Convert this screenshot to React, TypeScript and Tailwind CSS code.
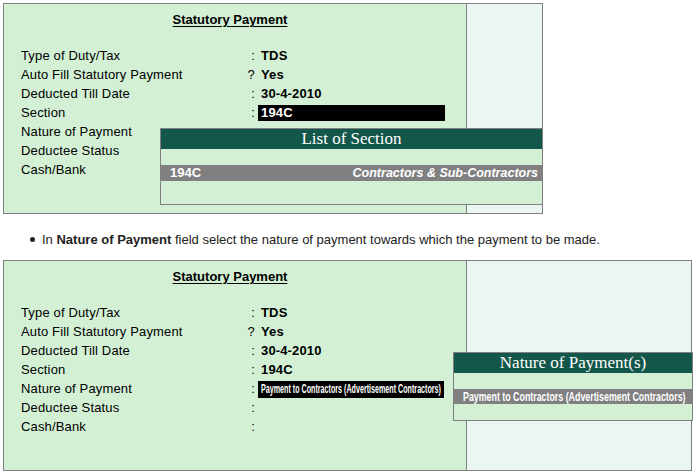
import React from "react";

type Row = { label: string; sep: string; value?: React.ReactNode };

const font = "font-['Liberation_Sans',Arial,sans-serif]";

function Field({ label, sep, value }: Row) {
  return (
    <div className="flex h-[19px] items-center text-[13px] tracking-[0.15px] text-black">
      <div className="w-[243px] shrink-0 pl-[17px] whitespace-nowrap">{label}</div>
      <div className="w-[11px] shrink-0 pr-[3px] text-right">{sep}</div>
      {value}
    </div>
  );
}

function Bold({ children }: { children: React.ReactNode }) {
  return <span className="pl-[3px] font-bold">{children}</span>;
}

function Panel({
  rows,
  width,
  popup,
}: {
  rows: Row[];
  width: string;
  popup: React.ReactNode;
}) {
  return (
    <div className={`relative flex h-[211px] ${width} border border-[#808080]`}>
      <div className="w-[462px] shrink-0 bg-[#d3f0d5] pt-[6px]">
        <div className="flex justify-center pr-[10px]">
          <span className="text-[13px] font-bold underline underline-offset-2">Statutory Payment</span>
        </div>
        <div className="mt-[17px]">
          {rows.map((r) => (
            <Field key={r.label} {...r} />
          ))}
        </div>
      </div>
      <div className="w-px shrink-0 bg-[#808080]" />
      <div className="flex-1 bg-[#ebf5f2]" />
      {popup}
    </div>
  );
}

export default function App() {
  const first: Row[] = [
    { label: "Type of Duty/Tax", sep: ":", value: <Bold>TDS</Bold> },
    { label: "Auto Fill Statutory Payment", sep: "?", value: <Bold>Yes</Bold> },
    { label: "Deducted Till Date", sep: ":", value: <Bold>30-4-2010</Bold> },
    {
      label: "Section",
      sep: ":",
      value: (
        <div className="flex h-[16px] w-[187px] items-center bg-black pl-[3px] font-bold text-white">
          194C
        </div>
      ),
    },
    { label: "Nature of Payment", sep: "" },
    { label: "Deductee Status", sep: "" },
    { label: "Cash/Bank", sep: "" },
  ];

  const second: Row[] = [
    { label: "Type of Duty/Tax", sep: ":", value: <Bold>TDS</Bold> },
    { label: "Auto Fill Statutory Payment", sep: "?", value: <Bold>Yes</Bold> },
    { label: "Deducted Till Date", sep: ":", value: <Bold>30-4-2010</Bold> },
    { label: "Section", sep: ":", value: <Bold>194C</Bold> },
    {
      label: "Nature of Payment",
      sep: ":",
      value: (
        <div className="flex h-[17px] w-[186px] items-center overflow-hidden bg-black pl-[3px] text-white">
          <span className="inline-block origin-left scale-x-[0.55] whitespace-nowrap text-[13px] font-bold tracking-normal">
            Payment to Contractors (Advertisement Contractors)
          </span>
        </div>
      ),
    },
    { label: "Deductee Status", sep: ":" },
    { label: "Cash/Bank", sep: ":" },
  ];

  return (
    <div className={`min-h-screen bg-white pl-[3px] pt-[3px] ${font}`}>
      <Panel
        rows={first}
        width="w-[540px]"
        popup={
          <div className="absolute left-[156px] top-[124px] w-[383px] border border-[#808080] bg-[#d3f0d5]">
            <div className="flex h-[20px] items-center justify-center bg-[#13574a] font-['Liberation_Serif',serif] text-[17px] text-white">
              List of Section
            </div>
            <div className="h-[16px]" />
            <div className="flex h-[16px] items-center justify-between bg-[#808080] pl-[9px] pr-[4px] text-[13px] font-bold text-white">
              <span>194C</span>
              <span className="text-[12.5px] italic">Contractors &amp; Sub-Contractors</span>
            </div>
            <div className="h-[23px]" />
          </div>
        }
      />

      <div className="flex h-[46px] items-start pl-[27px] pt-[18px] text-[13px] leading-[15px] text-[#222]">
        <span className="mr-[7px] mt-[5px] h-[5px] w-[5px] shrink-0 rounded-full bg-[#222]" />
        <span>
          In <b>Nature of Payment</b> field select the nature of payment towards which the payment to be made.
        </span>
      </div>

      <Panel
        rows={second}
        width="w-[689px]"
        popup={
          <div className="absolute left-[449px] top-[91px] w-[240px] border border-[#808080] bg-[#d3f0d5]">
            <div className="flex h-[20px] items-center justify-center bg-[#13574a] font-['Liberation_Serif',serif] text-[17px] text-white">
              Nature of Payment(s)
            </div>
            <div className="h-[16px]" />
            <div className="flex h-[15px] items-center overflow-hidden bg-[#808080] pl-[9px] text-white">
              <span className="inline-block origin-left scale-x-[0.68] whitespace-nowrap text-[13px] font-bold">
                Payment to Contractors (Advertisement Contractors)
              </span>
            </div>
            <div className="h-[16px]" />
          </div>
        }
      />
    </div>
  );
}
